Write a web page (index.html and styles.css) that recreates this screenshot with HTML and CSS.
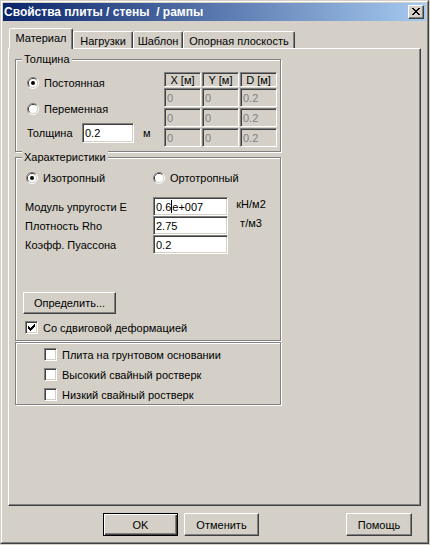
FILE: index.html
```html
<!DOCTYPE html>
<html lang="ru">
<head>
<meta charset="utf-8">
<title>Свойства плиты</title>
<link rel="stylesheet" href="styles.css">
</head>
<body>
<div class="window">
  <div class="frame">
    <div class="titlebar">
      <span class="title">Свойства плиты / стены  / рампы</span>
      <div class="close">
        <svg width="8" height="7" viewBox="0 0 8 7" shape-rendering="crispEdges"><path fill="#000" d="M0 0h2v1h-2zM6 0h2v1h-2zM1 1h2v1h-2zM5 1h2v1h-2zM2 2h4v1h-4zM3 3h2v1h-2zM2 4h4v1h-4zM1 5h2v1h-2zM5 5h2v1h-2zM0 6h2v1h-2zM6 6h2v1h-2z"/></svg>
      </div>
    </div>
    <div class="content">
      <div class="tabs">
        <div class="tab active t-mat">Материал</div>
        <div class="tab t-load">Нагрузки</div>
        <div class="tab t-tpl">Шаблон</div>
        <div class="tab t-base">Опорная плоскость</div>
      </div>
      <div class="panel">
        <div class="group g1">
          <span class="legend">Толщина</span>
          <div class="g1-left">
            <div class="opt">
              <svg class="radio" width="12" height="12" viewBox="0 0 12 12"><path d="M2.11 9.89A5.5 5.5 0 0 1 9.89 2.11" fill="none" stroke="#808080"/><path d="M9.89 2.11A5.5 5.5 0 0 1 2.11 9.89" fill="none" stroke="#fff"/><path d="M2.82 9.18A4.5 4.5 0 0 1 9.18 2.82" fill="none" stroke="#404040"/><path d="M9.18 2.82A4.5 4.5 0 0 1 2.82 9.18" fill="none" stroke="#d4d0c8"/><circle cx="6" cy="6" r="4" fill="#fff"/><circle cx="6" cy="6" r="2" fill="#000"/></svg>
              <span>Постоянная</span>
            </div>
            <div class="opt opt2">
              <svg class="radio" width="12" height="12" viewBox="0 0 12 12"><path d="M2.11 9.89A5.5 5.5 0 0 1 9.89 2.11" fill="none" stroke="#808080"/><path d="M9.89 2.11A5.5 5.5 0 0 1 2.11 9.89" fill="none" stroke="#fff"/><path d="M2.82 9.18A4.5 4.5 0 0 1 9.18 2.82" fill="none" stroke="#404040"/><path d="M9.18 2.82A4.5 4.5 0 0 1 2.82 9.18" fill="none" stroke="#d4d0c8"/><circle cx="6" cy="6" r="4" fill="#fff"/></svg>
              <span>Переменная</span>
            </div>
            <div class="thick-row">
              <span class="thick-label">Толщина</span>
              <div class="edit thick-edit">0.2</div>
              <span class="thick-unit">м</span>
            </div>
          </div>
          <div class="coords">
            <div class="cell head">X [м]</div>
            <div class="cell head">Y [м]</div>
            <div class="cell head">D [м]</div>
            <div class="cell">0</div>
            <div class="cell">0</div>
            <div class="cell">0.2</div>
            <div class="cell">0</div>
            <div class="cell">0</div>
            <div class="cell">0.2</div>
            <div class="cell">0</div>
            <div class="cell">0</div>
            <div class="cell">0.2</div>
          </div>
        </div>

        <div class="group g2">
          <span class="legend">Характеристики</span>
          <div class="radio-row">
            <div class="opt opt-iso">
              <svg class="radio" width="12" height="12" viewBox="0 0 12 12"><path d="M2.11 9.89A5.5 5.5 0 0 1 9.89 2.11" fill="none" stroke="#808080"/><path d="M9.89 2.11A5.5 5.5 0 0 1 2.11 9.89" fill="none" stroke="#fff"/><path d="M2.82 9.18A4.5 4.5 0 0 1 9.18 2.82" fill="none" stroke="#404040"/><path d="M9.18 2.82A4.5 4.5 0 0 1 2.82 9.18" fill="none" stroke="#d4d0c8"/><circle cx="6" cy="6" r="4" fill="#fff"/><circle cx="6" cy="6" r="2" fill="#000"/></svg>
              <span>Изотропный</span>
            </div>
            <div class="opt">
              <svg class="radio" width="12" height="12" viewBox="0 0 12 12"><path d="M2.11 9.89A5.5 5.5 0 0 1 9.89 2.11" fill="none" stroke="#808080"/><path d="M9.89 2.11A5.5 5.5 0 0 1 2.11 9.89" fill="none" stroke="#fff"/><path d="M2.82 9.18A4.5 4.5 0 0 1 9.18 2.82" fill="none" stroke="#404040"/><path d="M9.18 2.82A4.5 4.5 0 0 1 2.82 9.18" fill="none" stroke="#d4d0c8"/><circle cx="6" cy="6" r="4" fill="#fff"/></svg>
              <span>Ортотропный</span>
            </div>
          </div>
          <div class="props">
            <div class="prop">
              <span class="prop-label">Модуль упругости E</span>
              <div class="edit prop-edit">0.6<span class="caret"></span>e+007</div>
              <span class="prop-unit">кН/м2</span>
            </div>
            <div class="prop">
              <span class="prop-label">Плотность Rho</span>
              <div class="edit prop-edit">2.75</div>
              <span class="prop-unit">т/м3</span>
            </div>
            <div class="prop">
              <span class="prop-label">Коэфф. Пуассона</span>
              <div class="edit prop-edit">0.2</div>
            </div>
          </div>
          <div class="btn define">Определить...</div>
          <div class="check-row shear">
            <div class="check"><svg width="11" height="11" viewBox="0 0 11 11" shape-rendering="crispEdges"><path fill="#000" d="M2 4h1v1h1v1h1v-1h1v-1h1v-1h1v-1h1v3h-1v1h-1v1h-1v1h-1v1h-1v-1h-1v-1h-1z"/></svg></div>
            <span>Со сдвиговой деформацией</span>
          </div>
        </div>

        <div class="group g3">
          <div class="check-row"><div class="check"></div><span>Плита на грунтовом основании</span></div>
          <div class="check-row"><div class="check"></div><span>Высокий свайный ростверк</span></div>
          <div class="check-row"><div class="check"></div><span>Низкий свайный ростверк</span></div>
        </div>
      </div>
      <div class="buttons">
        <div class="btn default b-ok">OK</div>
        <div class="btn b-cancel">Отменить</div>
        <div class="btn b-help">Помощь</div>
      </div>
    </div>
  </div>
</div>
</body>
</html>
```
FILE: styles.css
```css
* { box-sizing: border-box; }
html, body { margin: 0; padding: 0; }
body {
  background: #d4d0c8;
  font-family: "Liberation Sans", Arial, sans-serif;
  font-size: 11px;
  color: #000;
  width: 430px;
  height: 545px;
  overflow: hidden;
}
.window {
  width: 429px;
  height: 544px;
  border: 1px solid;
  border-color: #d4d0c8 #404040 #404040 #d4d0c8;
}
.frame {
  height: 100%;
  border: 1px solid;
  border-color: #fff #808080 #808080 #fff;
  padding: 1px;
  display: flex;
  flex-direction: column;
}
.titlebar {
  height: 18px;
  flex: none;
  background: linear-gradient(to right, #0a246a, #a6caf0);
  display: flex;
  align-items: center;
  justify-content: space-between;
  padding: 0 2px 0 1px;
}
.title {
  color: #fff;
  font-weight: bold;
  white-space: pre;
  font-size: 12px;
}
.close {
  width: 16px;
  height: 14px;
  background: #d4d0c8;
  border: 1px solid;
  border-color: #fff #404040 #404040 #fff;
  box-shadow: inset -1px -1px #808080;
  display: flex;
  align-items: center;
  justify-content: center;
  padding-bottom: 1px;
}
.close svg { display: block; }
.content { padding-left: 5px; }

/* tabs */
.tabs {
  display: flex;
  align-items: flex-end;
  height: 20px;
  margin: 7px 0 0 1px;
  position: relative;
  z-index: 1;
}
.tab {
  height: 17px;
  border: 1px solid;
  border-bottom: none;
  border-color: #fff #404040 transparent #fff;
  box-shadow: inset -1px 0 #808080;
  border-radius: 2px 2px 0 0;
  display: flex;
  align-items: center;
  justify-content: center;
  padding-top: 1px;
  background: #d4d0c8;
}
.tab.active {
  height: 21px;
  margin-bottom: -1px;
  padding-bottom: 3px;
}
.t-mat { width: 64px; }
.t-load { width: 60px; }
.t-tpl { width: 50px; }
.t-base { width: 112px; }

.panel {
  width: 413px;
  height: 458px;
  border: 1px solid;
  border-color: #fff #404040 #404040 #fff;
  box-shadow: inset -1px -1px #808080;
  padding: 10px 0 0 6px;
}

/* group boxes */
.group {
  position: relative;
  width: 266px;
  border: 1px solid #808080;
  box-shadow: inset 1px 1px #fff, 1px 1px #fff;
}
.legend {
  position: absolute;
  top: -7px;
  left: 6px;
  padding: 0 2px;
  background: #d4d0c8;
  line-height: 13px;
}
.g1 { height: 93px; display: flex; }
.g1-left { width: 148px; padding: 17px 0 0 11px; }
.opt { display: flex; align-items: center; height: 12px; white-space: nowrap; }
.radio { display: block; flex: none; margin-right: 5px; }
.opt2 { margin-top: 14px; }
.thick-row { display: flex; align-items: center; margin-top: 8px; height: 20px; }
.thick-label { width: 55px; }
.thick-edit { width: 52px; height: 20px; }
.thick-unit { margin-left: 9px; }

.edit {
  background: #fff;
  border: 1px solid;
  border-color: #808080 #fff #fff #808080;
  box-shadow: inset 1px 1px #404040, inset -1px -1px #d4d0c8;
  padding: 0 0 0 2px;
  display: flex;
  align-items: center;
}
.caret {
  display: inline-block;
  width: 1px;
  height: 13px;
  background: #000;
}

.coords {
  margin-top: 12px;
  display: grid;
  grid-template-columns: 37px 37px 37px;
  grid-template-rows: 15px 19px 19px 19px;
  column-gap: 1px;
  row-gap: 1px;
  align-self: flex-start;
}
.cell {
  border: 1px solid;
  border-color: #808080 #fff #fff #808080;
  box-shadow: inset 1px 1px #404040, inset -1px -1px #d4d0c8;
  color: #808080;
  padding-left: 2px;
  display: flex;
  align-items: center;
}
.cell.head {
  color: #000;
  justify-content: center;
  padding-left: 0;
}

.g2 { height: 184px; margin-top: 5px; padding: 14px 0 0 9px; }
.radio-row { display: flex; padding-left: 1px; }
.opt-iso { width: 127px; }
.props { margin-top: 13px; }
.prop { display: flex; align-items: center; height: 19px; }
.prop-label { width: 128px; }
.prop-edit { width: 75px; height: 19px; }
.prop-unit { width: 40px; margin-left: 3px; text-align: center; align-self: flex-start; margin-top: 1px; }

.btn {
  height: 23px;
  background: #d4d0c8;
  border: 1px solid;
  border-color: #fff #404040 #404040 #fff;
  box-shadow: inset -1px -1px #808080;
  display: flex;
  align-items: center;
  justify-content: center;
}
.define { width: 93px; height: 22px; margin: 38px 0 0 -2px; }
.check-row { display: flex; align-items: center; height: 13px; white-space: nowrap; }
.check {
  width: 13px;
  height: 13px;
  flex: none;
  background: #fff;
  border: 1px solid;
  border-color: #808080 #fff #fff #808080;
  box-shadow: inset 1px 1px #404040, inset -1px -1px #d4d0c8;
  margin-right: 5px;
}
.check svg { display: block; }
.shear { margin-top: 7px; }

.g3 {
  height: 63px;
  margin-top: 1px;
  padding: 5px 0 0 28px;
  display: flex;
  flex-direction: column;
  gap: 7px;
}

.buttons { display: flex; margin-top: 7px; padding-left: 95px; }
.btn.default {
  border-color: #000;
  box-shadow: inset 1px 1px #fff, inset -1px -1px #404040, inset -2px -2px #808080;
}
.b-ok { width: 75px; }
.b-cancel { width: 75px; margin-left: 6px; }
.b-help { width: 66px; margin-left: 87px; }
```
